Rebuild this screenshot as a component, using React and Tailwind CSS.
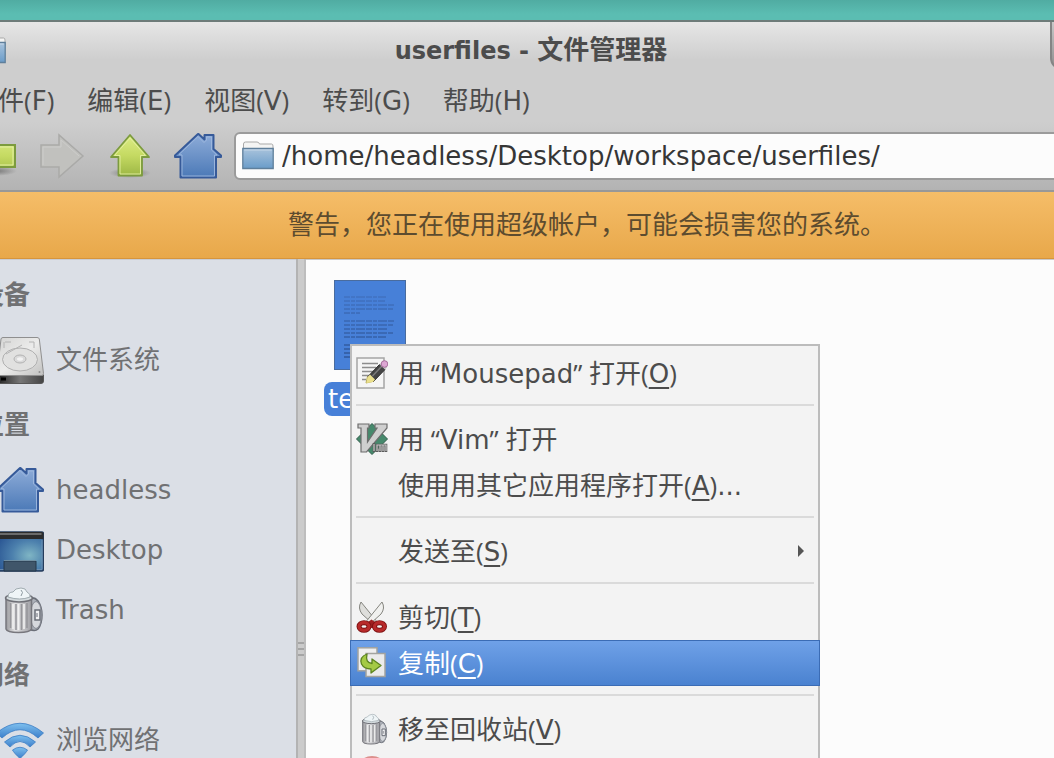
import { useState } from 'react';

const FolderIcon = () => (
    <svg viewBox="0 0 32 32" className="size-8 shrink-0" aria-hidden="true">
        <defs>
            <linearGradient id="folder" x1="0" y1="0" x2="0" y2="1">
                <stop offset="0" stopColor="#a9c3dc" />
                <stop offset="1" stopColor="#6a9cc9" />
            </linearGradient>
        </defs>
        <path d="M1.5 12V4Q1.5 2 3.5 2H15Q17 2 17.5 4H29.5Q31 4 31 6V12Z" fill="#f4f4f3" stroke="#a9a9a9" />
        <path d="M0.8 8.5H31.2V28.5H0.8Z" fill="url(#folder)" stroke="#5f7f9b" strokeWidth="1.3" />
        <path d="M2.2 10H29.8" stroke="#c6d8e8" />
    </svg>
);

const ArrowGradient = () => (
    <defs>
        <linearGradient id="arrow" x1="0" y1="0" x2="0" y2="1">
            <stop offset="0" stopColor="#dcec86" />
            <stop offset="0.5" stopColor="#c5da62" />
            <stop offset="1" stopColor="#9db745" />
        </linearGradient>
        <radialGradient id="arrowShadow">
            <stop offset="0" stopColor="#000" stopOpacity="0.35" />
            <stop offset="1" stopColor="#000" stopOpacity="0" />
        </radialGradient>
    </defs>
);

const BackIcon = () => (
    <svg viewBox="0 0 48 48" className="size-12" aria-hidden="true">
        <ArrowGradient />
        <ellipse cx="26" cy="39" rx="21" ry="5" fill="url(#arrowShadow)" />
        <path d="M2 24 25 3V13H45V35H25V45Z" fill="url(#arrow)" stroke="#7c9b3e" strokeWidth="2" />
        <path d="M27 15H43V33H27" fill="none" stroke="#e4f0a4" />
    </svg>
);

const ForwardIcon = () => (
    <svg viewBox="0 0 48 48" className="size-12" aria-hidden="true">
        <path d="M45 24 21 3V13H3V35H21V45Z" fill="#c1c1be" stroke="#aaaaa8" strokeWidth="1.5" />
        <path d="M5 33V15H23V8L41 24" fill="none" stroke="#cdcdcb" />
    </svg>
);

const UpIcon = () => (
    <svg viewBox="0 0 48 48" className="size-12" aria-hidden="true">
        <ArrowGradient />
        <ellipse cx="24" cy="41" rx="21" ry="5" fill="url(#arrowShadow)" />
        <path d="M24 3 43 25H36V43.500H12.5V25H5Z" fill="url(#arrow)" stroke="#7c9b3e" strokeWidth="1.8" strokeLinejoin="round" />
        <path d="M24 6 39.5 23.500H34.5V42H14V23.500H8.5Z" fill="none" stroke="#e4f0a4" strokeWidth="0.9" />
    </svg>
);

const HomeIcon = () => (
    <svg viewBox="0 0 48 48" className="size-12 shrink-0" aria-hidden="true">
        <defs>
            <linearGradient id="home" x1="0" y1="0" x2="0" y2="1">
                <stop offset="0" stopColor="#8eacd8" />
                <stop offset="1" stopColor="#4b79b7" />
            </linearGradient>
        </defs>
        <path d="M24 2 1 23.500V25H6.5V45.500H42V25H47V23.500L39.5 17V3H30.5V7.500L24.5 2Z" fill="url(#home)" stroke="#365a99" strokeWidth="2" strokeLinejoin="round" />
        <path d="M5 22.500 24 4.500 30 10.500 32.5 8V5H37.5V18L43 23H40.5V44H8V23Z" fill="none" stroke="#9fb9df" strokeWidth="0.9" />
    </svg>
);

const DriveIcon = () => (
    <svg viewBox="0 0 48 48" className="size-12 shrink-0" aria-hidden="true">
        <defs>
            <linearGradient id="driveTop" x1="0" y1="0" x2="1" y2="1">
                <stop offset="0" stopColor="#d4d4d3" />
                <stop offset="0.5" stopColor="#ececeb" />
                <stop offset="1" stopColor="#c0c0bf" />
            </linearGradient>
            <linearGradient id="driveFront" x1="0" y1="0" x2="1" y2="0">
                <stop offset="0" stopColor="#222" />
                <stop offset="0.5" stopColor="#777" />
                <stop offset="1" stopColor="#444" />
            </linearGradient>
        </defs>
        <path d="M1 39H47.5V45Q47.5 47.5 45 47.5H3Q1 47.5 1 45Z" fill="url(#driveFront)" stroke="#565656" />
        <path d="M5 3Q5.3 1.5 7 1.5H41Q43 1.5 43.3 3L47.5 37.5Q47.5 39.5 46 39.5H2.5Q1 39.5 1 37.5Z" fill="url(#driveTop)" stroke="#8f8f8f" />
        <ellipse cx="24" cy="23.5" rx="17.5" ry="11.5" fill="#e1e1e0" stroke="#b0b0b0" />
        <ellipse cx="24" cy="23" rx="6" ry="4" fill="#dadada" stroke="#b2b2b2" />
        <path d="M9 6H15M8 6V12M33 6H38V12M10 18 26 9" fill="none" stroke="#b4b4b4" />
        <ellipse cx="24" cy="23" rx="3" ry="1.8" fill="#f3f3f3" />
        <circle cx="43.5" cy="36" r="1" fill="#8f8f8f" />
        <path d="M5 43H10" stroke="#000" strokeWidth="3" />
    </svg>
);

const DesktopIcon = () => (
    <svg viewBox="0 0 48 48" className="size-12 shrink-0" aria-hidden="true">
        <defs>
            <radialGradient id="screen" cx="0.7" cy="0.6" r="0.75">
                <stop offset="0" stopColor="#7fb5c4" />
                <stop offset="0.5" stopColor="#4c80ad" />
                <stop offset="1" stopColor="#2b5794" />
            </radialGradient>
        </defs>
        <rect x="1" y="6" width="46.5" height="39" rx="2" fill="url(#screen)" stroke="#263c5c" strokeWidth="1.5" />
        <path d="M1 13V7.5Q1 6 3 6H45.5Q47.5 6 47.5 7.5V13Z" fill="#2c2c2c" />
        <path d="M3 8H45.5" stroke="#6b6b6b" strokeWidth="2" />
        <path d="M2.5 14V43.5H46V14" fill="none" stroke="#7394b5" strokeWidth="0.8" />
        <path d="M8 45V35H40V45Z" fill="#40566a" stroke="#22364b" />
        <path d="M8 34.5H40" stroke="#7d9aab" strokeWidth="0.8" />
    </svg>
);

const TrashIcon = ({ className }) => (
    <svg viewBox="0 0 48 48" className={className} aria-hidden="true">
        <defs>
            <linearGradient id="can" x1="0" y1="0" x2="1" y2="0">
                <stop offset="0" stopColor="#98989c" />
                <stop offset="0.35" stopColor="#e2e2e4" />
                <stop offset="1" stopColor="#a0a0a5" />
            </linearGradient>
        </defs>
        <path d="M32 13Q38 10 42 15Q46 21 46 29Q46 38 42 43Q39 46 33 43Z" fill="#aeb2ba" stroke="#6b6f78" strokeWidth="1.5" />
        <ellipse cx="40" cy="29" rx="5.5" ry="13.5" fill="#d6d8dc" stroke="#858992" />
        <path d="M10 12V43Q11 46.5 22.5 46.5T35.5 43V12Z" fill="url(#can)" stroke="#77777d" strokeWidth="1.5" />
        <path d="M14.5 17V42M20 18V44M25.5 18V44M31 17V42" stroke="#97979b" strokeWidth="1.6" />
        <path d="M17 18V43M22.5 18V44M28 18V43" stroke="#f0f0f1" strokeWidth="1.6" />
        <ellipse cx="23" cy="12" rx="13.5" ry="4" fill="#d3dadd" stroke="#6f7077" strokeWidth="1.5" />
        <path d="M12 11Q12 6 17 6Q19 2 25 2Q30 2 31 6Q35 8 34 11Q24 15 12 11Z" fill="#eff5f7" stroke="#a0abb0" />
        <path d="M25 4Q28 6 25 10" fill="none" stroke="#8d999f" />
        <path d="M39 24H44V34H39Z" fill="#f0f0f2" stroke="#6b6f78" strokeWidth="1.5" />
        <path d="M41 27V31" stroke="#6b6f78" />
    </svg>
);

const NetworkIcon = () => (
    <svg viewBox="0 0 48 48" className="size-12 shrink-0" aria-hidden="true">
        <defs>
            <linearGradient id="wave" x1="0" y1="0" x2="0" y2="1">
                <stop offset="0" stopColor="#7ec0ee" />
                <stop offset="1" stopColor="#3c7fcb" />
            </linearGradient>
        </defs>
        <g fill="url(#wave)" stroke="#3a7cc4" strokeWidth="0.8" strokeLinejoin="round">
            <path d="M0.5 17Q24 -2.5 47.5 17L42 22Q24 5.5 6 22Z" />
            <path d="M8.5 26Q24 12.5 39.5 26L34 31Q24 20 14 31Z" />
            <path d="M16.5 34Q24 28.5 31.5 34Q30 37 24 42.5Q18 37 16.5 34Z" />
        </g>
    </svg>
);

const MousepadIcon = () => (
    <svg viewBox="0 0 32 32" className="size-8 shrink-0" aria-hidden="true">
        <rect x="1" y="1" width="27" height="30" fill="#f5f5f5" stroke="#a5a5a5" strokeWidth="1.5" />
        <path d="M6 6.5H22M6 10.5H20M6 14.5H18M6 18.5H14M6 22.5H10" stroke="#8d8d8d" strokeWidth="1.5" />
        <path d="M10 26 11.5 19.5 16.5 24.5Z" fill="#ebe08d" stroke="#b5ab5a" />
        <path d="M12 19.5 23.5 7.5 29 12.5 17 25Z" fill="#444" stroke="#2c2c2c" />
        <path d="M12 19.5 14 17.5 19 22.5 17 25 10.5 26Z" fill="#ebe08d" />
        <path d="M16.5 19 26 9" stroke="#7a7a7a" strokeWidth="1.5" />
        <path d="M23.5 7.5 25.5 5.5 31 10.5 29 12.5Z" fill="#c3c3c3" />
        <circle cx="28.5" cy="7" r="3.3" fill="#dda7d3" stroke="#a66f9c" />
    </svg>
);

const VimIcon = () => (
    <svg viewBox="0 0 32 32" className="size-8 shrink-0" aria-hidden="true">
        <path d="M16 0.5 31.5 16 16 31.5 0.5 16Z" fill="#46896c" stroke="#2f5a48" />
        <path d="M2 1H13V5H11.500V19L21 5H19V1H31V5L10.500 29H5V5H2Z" fill="#cfcfcf" stroke="#6d6d6d" strokeWidth="1.2" />
        <path d="M18 20V29M21 29V22H24V29M24 22H27V29M27 22H30V29" fill="none" stroke="#5c5c5c" strokeWidth="2.6" />
        <path d="M18 21V28M21 28V22H24V28M24 22H27V28M27 22H30V28" fill="none" stroke="#c6c6c6" strokeWidth="1.2" />
    </svg>
);

const CutIcon = () => (
    <svg viewBox="0 0 32 32" className="size-8 shrink-0" aria-hidden="true">
        <path d="M5 1Q1.5 7 6 13L17 23 20 19.500Z" fill="#dededb" stroke="#85857f" />
        <path d="M26 1Q29.5 7 25 13L14 23 11 19.500Z" fill="#f1f1ef" stroke="#85857f" />
        <path d="M12 21 15.5 18.500 19 21V27H12Z" fill="#9f2020" />
        <ellipse cx="8" cy="25.5" rx="5" ry="3.800" fill="none" stroke="#7d1212" strokeWidth="5" />
        <ellipse cx="23.5" cy="25.5" rx="5" ry="3.800" fill="none" stroke="#7d1212" strokeWidth="5" />
        <ellipse cx="8" cy="25.5" rx="5" ry="3.800" fill="none" stroke="#b82a2a" strokeWidth="3.200" />
        <ellipse cx="23.5" cy="25.5" rx="5" ry="3.800" fill="none" stroke="#b82a2a" strokeWidth="3.200" />
    </svg>
);

const CopyIcon = () => (
    <svg viewBox="0 0 32 32" className="size-8 shrink-0" aria-hidden="true">
        <rect x="2" y="0.8" width="19" height="23" fill="#efefef" stroke="#a3a39f" strokeWidth="1.5" />
        <rect x="10" y="6.5" width="19" height="23" fill="#ebebeb" stroke="#a3a39f" strokeWidth="1.5" />
        <path d="M11 7Q3 10 5.500 17Q8 22 15 22V26L25 18.5 16 12V16.5Q9 16 11 7Z" fill="#a4ca45" stroke="#5c8420" strokeWidth="1.3" strokeLinejoin="round" />
    </svg>
);

const DeleteIcon = () => (
    <svg viewBox="0 0 32 32" className="size-8 shrink-0" aria-hidden="true">
        <circle cx="16" cy="16" r="15" fill="#d9534f" stroke="#dc8f8c" strokeWidth="2" />
        <path d="M9 16H23" stroke="#fff" strokeWidth="4" />
    </svg>
);

// Punctuation comes from a narrower face than the letters around it
const Narrow = ({ children }) => (
    <span className="whitespace-pre font-['Open_Sans',sans-serif]">{children}</span>
);

const Mnemonic = ({ letter, underline }) => (
    <>
        <Narrow>(</Narrow>
        <span className={underline ? 'underline decoration-2 underline-offset-4 [text-decoration-skip-ink:none]' : ''}>{letter}</span>
        <Narrow>)</Narrow>
    </>
);

const OpenWith = ({ app }) => (
    <>用<Narrow>{' “'}</Narrow>{app}<Narrow>{'” '}</Narrow>打开</>
);

const menus = [
    { label: '文件', letter: 'F' },
    { label: '编辑', letter: 'E' },
    { label: '视图', letter: 'V' },
    { label: '转到', letter: 'G' },
    { label: '帮助', letter: 'H' },
];

const places = [
    { title: '设备', items: [{ name: '文件系统', icon: <DriveIcon /> }] },
    {
        title: '位置',
        items: [
            { name: 'headless', icon: <HomeIcon /> },
            { name: 'Desktop', icon: <DesktopIcon /> },
            { name: 'Trash', icon: <TrashIcon className="size-12 shrink-0" /> },
        ],
    },
    { title: '网络', items: [{ name: '浏览网络', icon: <NetworkIcon /> }] },
];

const MenuItem = ({ icon, active, submenu, children }) => (
    <button
        type="button"
        role="menuitem"
        className={`-mx-0.5 flex h-[46px] items-center gap-2.5 text-left ${
            active
                ? 'border border-[#3b6cb5] bg-linear-to-b from-[#6fa1e8] to-[#4a82d0] px-[5px] text-white'
                : 'px-1.5 text-[#4c4c4c]'
        }`}
    >
        <span className="flex w-8 shrink-0">{icon}</span>
        <span className="flex-1">{children}</span>
        {submenu && (
            <svg viewBox="0 0 8 12" className="mr-2 h-3 w-2" aria-hidden="true">
                <path d="M0 0 6 6 0 12Z" fill="#555" />
            </svg>
        )}
    </button>
);

const Separator = () => <div role="separator" className="mx-1 mt-2 mb-2.5 h-0.5 shrink-0 bg-[#dadada]" />;

const ContextMenu = () => (
    <div
        role="menu"
        className="absolute top-[344px] left-[350px] flex w-[470px] flex-col border-2 border-[#bcbcbc] bg-[#f3f3f3] pt-1"
    >
        <MenuItem icon={<MousepadIcon />}><OpenWith app="Mousepad" /><Mnemonic letter="O" underline /></MenuItem>
        <Separator />
        <MenuItem icon={<VimIcon />}><OpenWith app="Vim" /></MenuItem>
        <MenuItem>使用用其它应用程序打开<Mnemonic letter="A" underline />...</MenuItem>
        <Separator />
        <MenuItem submenu>发送至<Mnemonic letter="S" underline /></MenuItem>
        <Separator />
        <MenuItem icon={<CutIcon />}>剪切<Mnemonic letter="T" underline /></MenuItem>
        <MenuItem icon={<CopyIcon />} active>复制<Mnemonic letter="C" underline /></MenuItem>
        <Separator />
        <MenuItem icon={<TrashIcon className="size-8" />}>移至回收站<Mnemonic letter="V" underline /></MenuItem>
        <div className="flex items-start px-1 pt-1">
            <DeleteIcon />
        </div>
    </div>
);

const textLines = [
    [16, 42], [20, 41], [24, 50], [28, 49], [32, 16],
    [40, 50], [44, 49], [48, 44], [52, 49], [56, 42],
    [64, 50], [68, 48], [72, 46], [76, 49],
];

const FileItem = () => (
    <div className="flex w-[92px] flex-col items-center gap-3">
        <svg viewBox="0 0 72 90" className="h-[90px] w-[72px]" aria-hidden="true">
            <defs>
                <linearGradient id="ink" gradientUnits="userSpaceOnUse" x1="0" y1="10" x2="0" y2="80">
                    <stop offset="0" stopColor="#4274c5" />
                    <stop offset="1" stopColor="#2e5698" />
                </linearGradient>
            </defs>
            <rect x="0.5" y="0.5" width="71" height="89" fill="#4780d8" stroke="#4a6c9e" />
            {textLines.map(([y, width]) => (
                <path key={y} d={`M10 ${y + 1}h${width}`} stroke="url(#ink)" strokeWidth="1.5" strokeDasharray="6 1 4 1 9 1" />
            ))}
        </svg>
        <span className="w-full rounded-lg bg-[#4780d8] px-1 leading-[34px] text-white">te</span>
    </div>
);

const App = () => {
    const [path, setPath] = useState('/home/headless/Desktop/workspace/userfiles/');

    return (
        <div className="relative flex h-screen flex-col overflow-hidden bg-linear-to-b from-[#50aca2] to-[#5bbdb2] to-[14px] font-['DejaVu_Sans','Noto_Sans_CJK_SC',sans-serif] text-[26px] leading-8 text-[#4c4c4c]">
            {/* The window reaches past both sides of the screen */}
            <div className="mt-5 -mr-10 -ml-8 flex min-h-0 flex-1 flex-col border-t-2 border-[#6d7b79] bg-[#cecece]">
                <header className="flex h-14 shrink-0 items-center bg-linear-to-b from-[#e6e6e6] to-[#cecece] to-[38px]">
                    <div className="flex w-11 pl-1.5">
                        <FolderIcon />
                    </div>
                    <h1 className="flex-1 text-center text-[24px] font-bold">
                        userfiles - <span className="text-[26px]">文件管理器</span>
                    </h1>
                    <button
                        type="button"
                        aria-label="关闭"
                        className="h-12 w-11 self-start rounded-b-xl border-2 border-t-0 border-[#858585] bg-linear-to-b from-[#c8c8c8] to-[#8f8f8f]"
                    />
                </header>

                <nav className="flex h-11 shrink-0 items-center gap-[33px] pl-1">
                    {menus.map((menu) => (
                        <button key={menu.letter} type="button">
                            {menu.label}<Mnemonic letter={menu.letter} />
                        </button>
                    ))}
                </nav>

                <div className="flex h-[70px] shrink-0 items-center border-b-2 border-[#989898] bg-linear-to-b from-[#cecece] to-[#b3b3b3] pl-0.5">
                    <div className="flex gap-5">
                        <button type="button" aria-label="后退"><BackIcon /></button>
                        <button type="button" aria-label="前进" disabled><ForwardIcon /></button>
                        <button type="button" aria-label="上级"><UpIcon /></button>
                        <button type="button" aria-label="主目录"><HomeIcon /></button>
                    </div>
                    <label className="ml-3 flex h-12 flex-1 items-center gap-2 rounded-md border-2 border-[#9b9b9b] bg-[#fcfcfc] px-1.5">
                        <FolderIcon />
                        <input
                            type="text"
                            aria-label="位置"
                            value={path}
                            onChange={(e) => setPath(e.target.value)}
                            className="min-w-0 flex-1 bg-transparent text-[#363636] outline-none"
                        />
                    </label>
                </div>

                <p className="flex h-[67px] shrink-0 items-center justify-center border-b border-[#d7953c] bg-linear-to-b from-[#f5bd68] to-[#e8a84a] pl-28 text-[#5d4c2f]">
                    警告，您正在使用超级帐户，可能会损害您的系统。
                </p>

                <main className="flex min-h-0 flex-1">
                    <aside className="w-[328px] shrink-0 overflow-hidden border-t border-[#c9ccd2] bg-[#dbdfe6] text-[#707173]">
                        {places.map((group) => (
                            <section key={group.title}>
                                <h2 className="flex h-[70px] items-center pl-2.5 font-bold">{group.title}</h2>
                                {group.items.map((item) => (
                                    <a key={item.name} href="#" className="flex h-[60px] items-center gap-3 pl-7">
                                        {item.icon}
                                        {item.name}
                                    </a>
                                ))}
                            </section>
                        ))}
                    </aside>
                    <div className="flex w-2.5 shrink-0 flex-col items-center justify-center gap-1 border-x-2 border-l-[#b3b3b3] border-r-[#bdbdbd] bg-[#cbcbcb] pt-[280px]">
                        <span className="h-0.5 w-full bg-[#a5a5a5]" />
                        <span className="h-0.5 w-full bg-[#a5a5a5]" />
                        <span className="h-0.5 w-full bg-[#a5a5a5]" />
                    </div>
                    <section className="flex-1 border-t border-[#c9c9c9] bg-[#fcfcfc] pt-5 pl-[18px]">
                        <FileItem />
                    </section>
                </main>
            </div>

            <ContextMenu />
        </div>
    );
};

export default App;
